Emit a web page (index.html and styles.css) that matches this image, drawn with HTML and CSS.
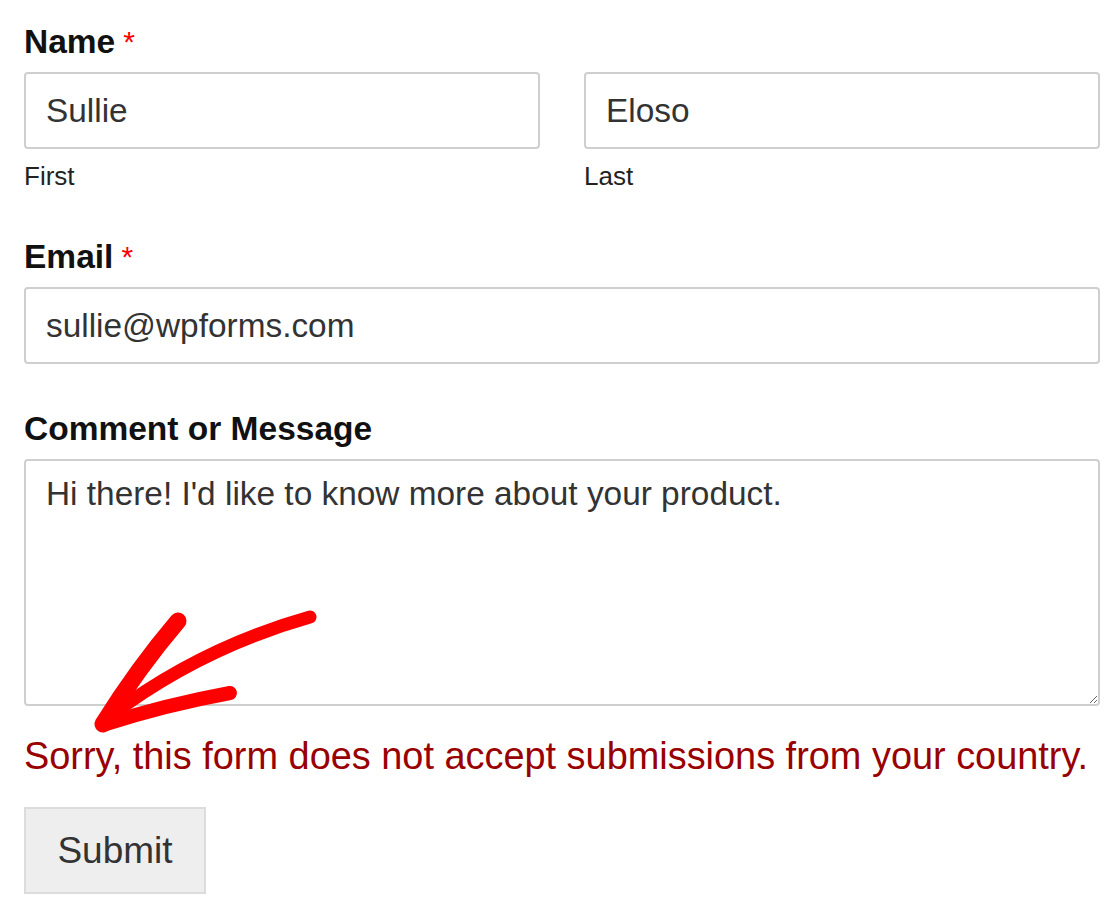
FILE: index.html
```html
<!DOCTYPE html>
<html>
<head>
<meta charset="utf-8" />
<title>Contact form</title>
<link rel="stylesheet" href="styles.css">
</head>
<body>
  <div id="page">
    <form class="wpform" action="javascript:;">
      <div class="field">
        <label class="field-label">Name<span class="req">*</span></label>
        <div class="name-row">
          <div class="name-col">
            <input class="text-input" type="text" value="Sullie" />
            <span class="sublabel">First</span>
          </div>
          <div class="name-col">
            <input class="text-input" type="text" value="Eloso" />
            <span class="sublabel">Last</span>
          </div>
        </div>
      </div>

      <div class="field">
        <label class="field-label">Email<span class="req">*</span></label>
        <input class="text-input" type="email" value="sullie@wpforms.com" />
      </div>

      <div class="field field-last">
        <label class="field-label">Comment or Message</label>
        <textarea class="text-area">Hi there! I'd like to know more about your product.</textarea>
      </div>

      <div class="error">Sorry, this form does not accept submissions from your country.</div>

      <button class="submit" type="button">Submit</button>
    </form>

    <!-- hand drawn arrow pointing at the error -->
    <svg class="arrow" width="1116" height="923" viewBox="0 0 1116 923">
      <g fill="none" stroke="#ff0000" stroke-linecap="round" stroke-linejoin="round">
        <path d="M310 617 Q 200 648 110 716" stroke-width="13" />
        <path d="M178 621 Q 138 668 103 724" stroke-width="17" />
        <path d="M230 693 Q 165 705 106 724" stroke-width="14" />
      </g>
    </svg>
  </div>
</body>
</html>
```

FILE: styles.css
```css
body
{
	margin: 0;
	padding: 0;
	background: #fff;
	font-family: "Liberation Sans", Arial, sans-serif;
}
#page
{
	position: relative;
	width: 1116px;
	height: 923px;
	overflow: hidden;
}
.wpform
{
	padding: 22px 16px 0 24px;
}
.field
{
	margin-bottom: 45px;
}
.field-last
{
	margin-bottom: 0;
}
.field-label
{
	display: block;
	font-size: 33.5px;
	line-height: 40px;
	font-weight: bold;
	color: #111;
	margin-bottom: 10px;
}
.req
{
	font-weight: normal;
	font-size: 30px;
	color: #ff0000;
	margin-left: 8px;
	vertical-align: top;
}
.name-row
{
	display: flex;
	gap: 44px;
}
.name-col
{
	flex: 1;
	display: flex;
	flex-direction: column;
}
.text-input,
.text-area
{
	display: block;
	width: 100%;
	box-sizing: border-box;
	border: 2px solid #cfcfcf;
	border-radius: 4px;
	background: #fff;
	color: #333;
	font-family: "Liberation Sans", Arial, sans-serif;
	font-size: 33.4px;
	outline: none;
}
.text-input
{
	height: 77px;
	padding: 0 20px;
}
.text-area
{
	height: 247px;
	padding: 11px 20px;
	line-height: 1.3;
	resize: vertical;
}
.sublabel
{
	display: block;
	margin-top: 12px;
	font-size: 26px;
	line-height: 31px;
	color: #222;
}
.error
{
	margin-top: 26px;
	font-size: 37.9px;
	line-height: 1.3;
	color: #990000;
	white-space: nowrap;
}
.submit
{
	display: block;
	margin-top: 26px;
	width: 182px;
	height: 87px;
	box-sizing: border-box;
	border: 2px solid #dcdcdc;
	background: #eeeeee;
	color: #333;
	font-family: "Liberation Sans", Arial, sans-serif;
	font-size: 37px;
	padding: 0;
	cursor: pointer;
}
.arrow
{
	position: absolute;
	left: 0;
	top: 0;
	pointer-events: none;
}
```
